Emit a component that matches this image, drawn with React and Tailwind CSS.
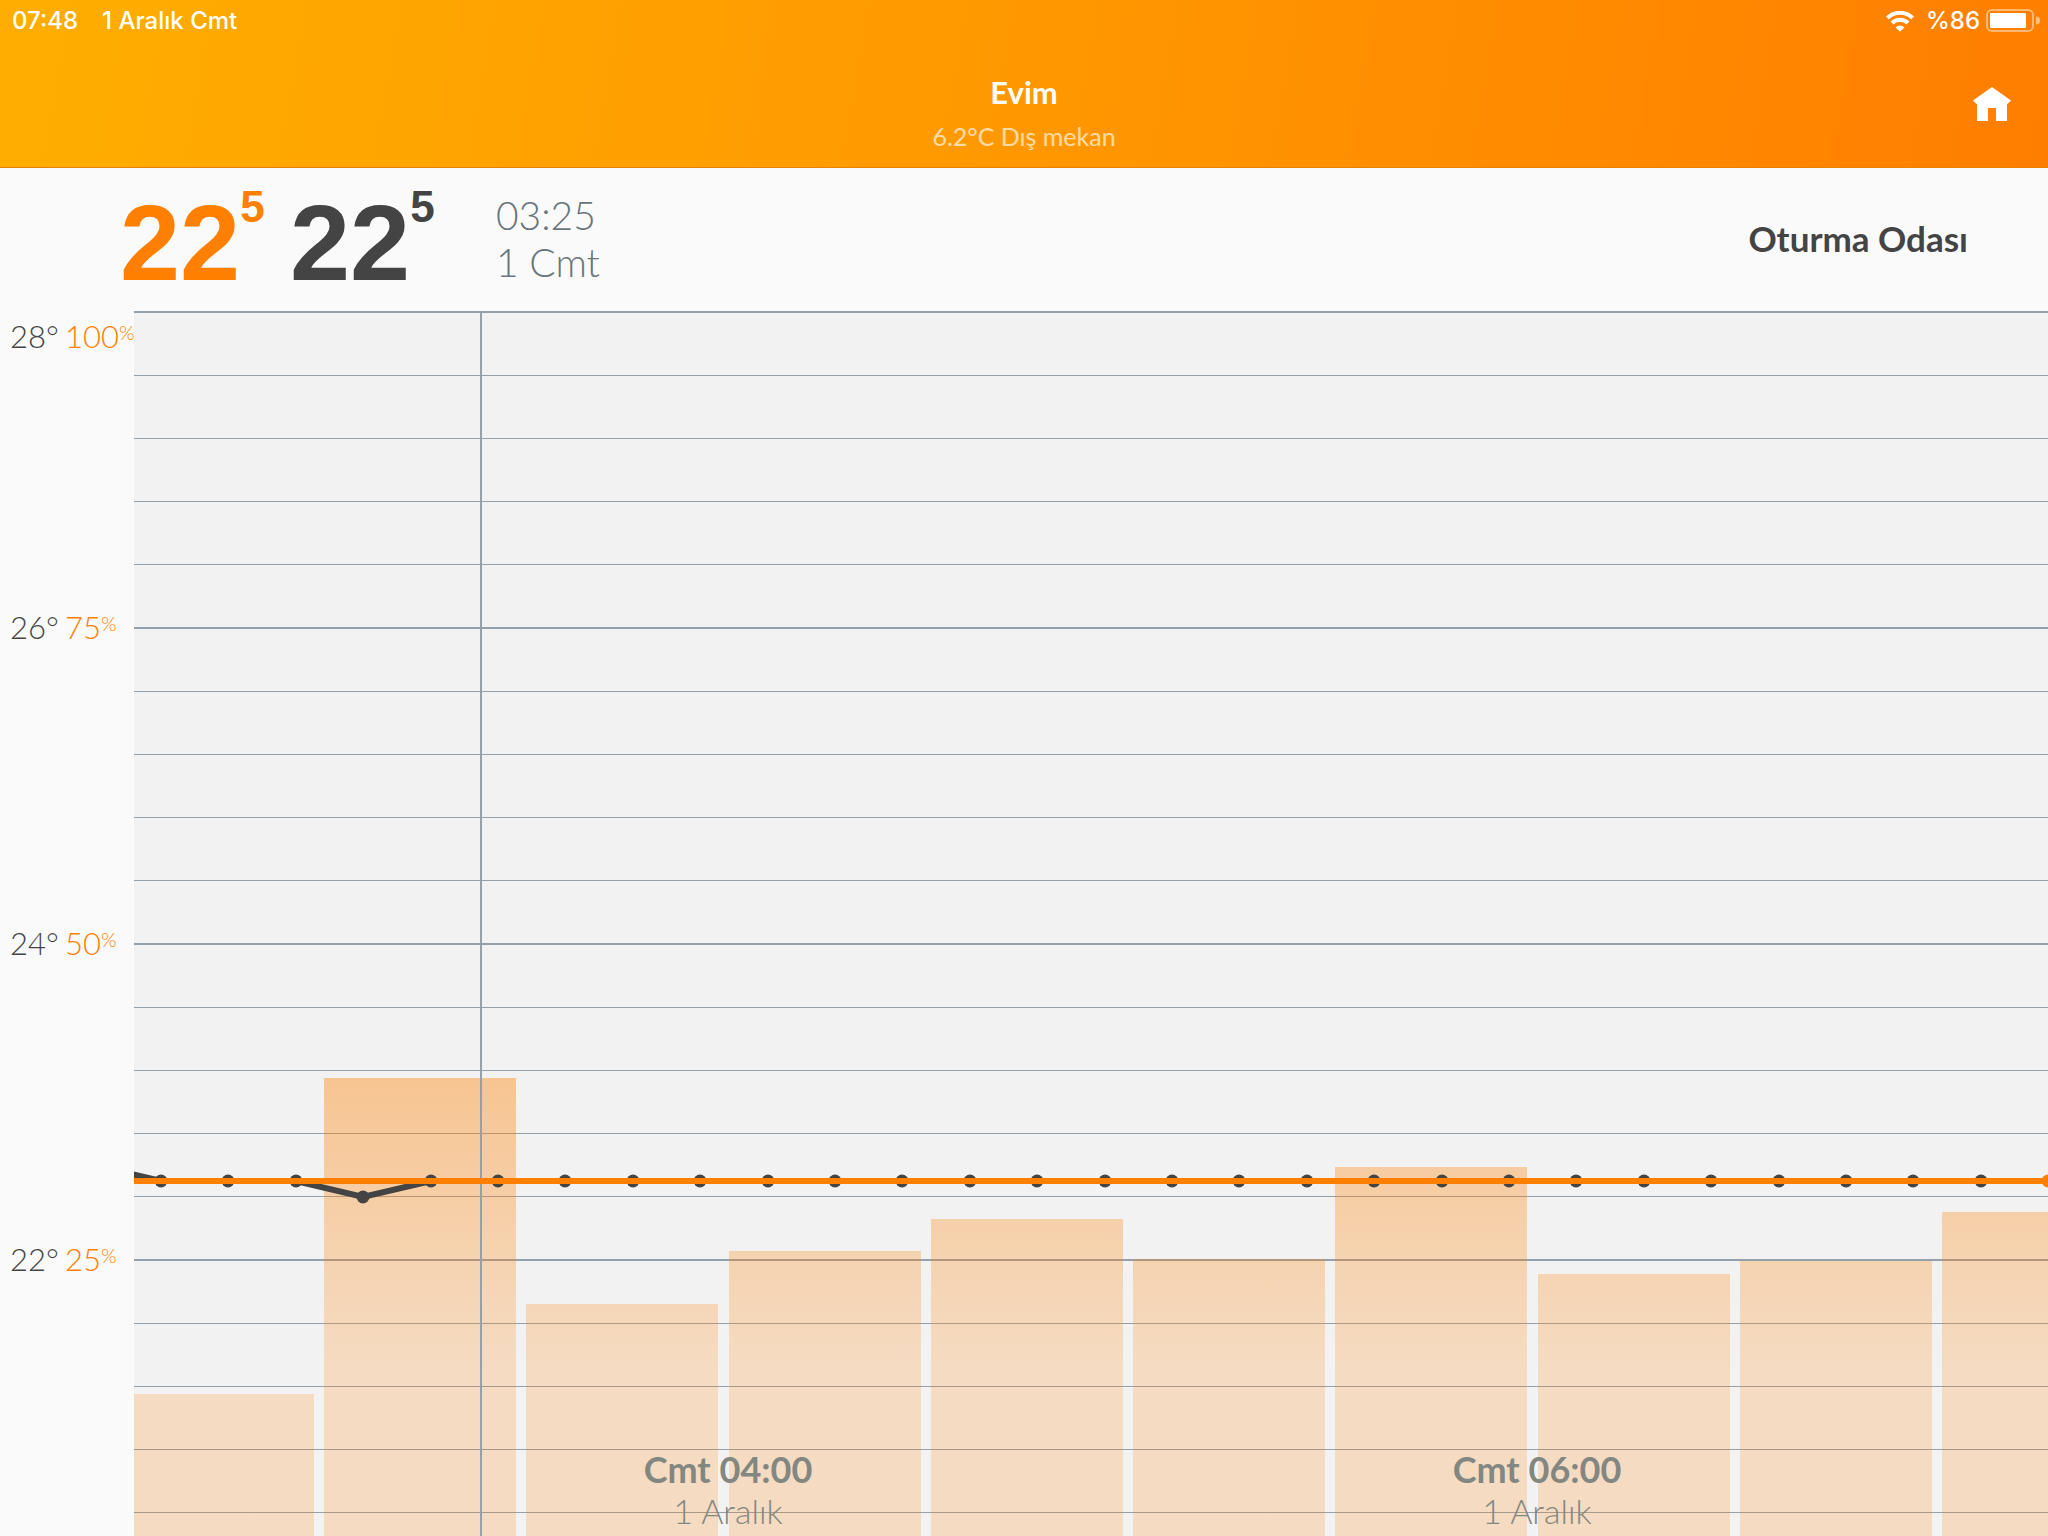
const AXIS = [
  { temp: 28, percent: 100, box: 'h-[159px] pt-[3px]' },
  { temp: 26, percent: 75, box: 'h-[316px] pt-[135px]' },
  { temp: 24, percent: 50, box: 'h-[316px] pt-[135px]' },
  { temp: 22, percent: 25, box: 'h-[316px] pt-[135px]' },
];

/* Chart coordinates are in pixels from the top left corner of the plot. */
const PLOT_HEIGHT = 1225;
const GRID = Array.from({ length: 20 }, (_, i) => ({
  major: i % 5 === 0,
  y: i % 5 === 0 ? Math.round(i * 63.2) : Math.floor(1 + i * 63.2),
}));

const BARS = [
  { x: -12, y: 1083 },
  { x: 190, y: 767 },
  { x: 392, y: 993 },
  { x: 595, y: 940 },
  { x: 797, y: 908 },
  { x: 999, y: 948 },
  { x: 1201, y: 856 },
  { x: 1404, y: 963 },
  { x: 1606, y: 950 },
  { x: 1808, y: 901 },
];

const LINE_Y = 870;
const POINTS = Array.from({ length: 28 }, (_, i) => ({
  x: Math.round(27 + i * 67.4),
  y: i === 3 ? LINE_Y + 16 : LINE_Y,
}));
const MEASURED = [{ x: -40, y: LINE_Y - 16 }, ...POINTS].map((p) => `${p.x},${p.y}`).join(' ');

const TIMES = [
  { x: 594, time: 'Cmt 04:00', date: '1 Aralık' },
  { x: 1403, time: 'Cmt 06:00', date: '1 Aralık' },
];

function WifiIcon() {
  return (
    <svg className="h-[21px] w-7" viewBox="0 0 28 21" fill="none" aria-hidden="true">
      <path d="M1.4 7a17.8 17.8 0 0 1 25.2 0" stroke="#fff" strokeWidth="4" />
      <path d="M6 12a11.3 11.3 0 0 1 16 0" stroke="#fff" strokeWidth="4" />
      <path d="M14 20.8 9.6 16.4a6.2 6.2 0 0 1 8.8 0Z" fill="#fff" />
    </svg>
  );
}

function BatteryIcon() {
  return (
    <svg className="h-6 w-[54px]" viewBox="0 0 54 24" aria-hidden="true">
      <rect x="1" y="1" width="46" height="21" rx="5" fill="none" stroke="#fff" strokeOpacity=".45" strokeWidth="2" />
      <rect x="4" y="4" width="36" height="15" rx="1" fill="#fff" />
      <path d="M50 7.5v8a4 4 0 0 0 0-8Z" fill="#fff" fillOpacity=".5" />
    </svg>
  );
}

function HomeIcon() {
  return (
    <svg className="h-[34px] w-[38px]" viewBox="0 0 38 34" fill="#fff" aria-hidden="true">
      <path d="M19 0 38 13.5 34.5 17H34V34H23V21H15V34H4V17H3.5L0 13.5Z" />
    </svg>
  );
}

function Reading({ label, color, whole, fraction }) {
  return (
    <div className={`flex w-[170px] items-start font-['Liberation_Sans'] font-bold ${color}`} aria-label={label}>
      <span className="pt-2 text-[108px] leading-[108px]">{whole}</span>
      <span className="pt-1 text-[44px] leading-[44px]">{fraction}</span>
    </div>
  );
}

function Chart() {
  return (
    <svg className="min-h-[1225px] min-w-0 flex-1 bg-[#f2f2f2] font-[Lato,sans-serif]" role="img" aria-label="Oturma Odası">
      <defs>
        <linearGradient id="bar" gradientUnits="userSpaceOnUse" x1="0" y1="767" x2="0" y2="1055">
          <stop offset="0" stopColor="#ff8000" stopOpacity=".4" />
          <stop offset="1" stopColor="#ff8000" stopOpacity=".2" />
        </linearGradient>
      </defs>
      {GRID.map((line) => (
        <rect key={line.y} x="0" y={line.y} width="100%" height={line.major ? 2 : 1} fill="#94a0ab" />
      ))}
      {BARS.map((bar) => (
        <rect key={bar.x} x={bar.x} y={bar.y} width="192" height={PLOT_HEIGHT - bar.y} fill="url(#bar)" />
      ))}
      <rect x="346" y="0" width="2" height="100%" fill="#94a0ab" />
      <polyline points={MEASURED} fill="none" stroke="#444" strokeWidth="6" />
      {POINTS.map((p) => (
        <circle key={p.x} cx={p.x} cy={p.y} r="6.5" fill="#444" />
      ))}
      <rect x="0" y={LINE_Y - 3} width="100%" height="6" fill="#ff8000" />
      <circle cx="1914" cy={LINE_Y} r="6.5" fill="#ff8000" />
      {TIMES.map((t) => (
        <g key={t.x} textAnchor="middle" fill="#838781">
          <text x={t.x} y="1172" className="text-[36px] font-bold">{t.time}</text>
          <text x={t.x} y="1213" className="text-[34px] font-light">{t.date}</text>
        </g>
      ))}
    </svg>
  );
}

export default function App() {
  return (
    <div className="flex min-h-screen flex-col bg-[#fafafa] font-[Lato,sans-serif] text-[#444]">
      <header className="flex h-[168px] flex-col border-b border-[#e88000] bg-[linear-gradient(100deg,#ffae00,#ff9800_50%,#ff7e00)] text-white">
        <div className="flex h-[42px] items-center justify-between pr-2 pl-3 font-[Inter,sans-serif] text-[24px] font-medium">
          <div className="flex gap-6">
            <span>07:48</span>
            <span>1 Aralık Cmt</span>
          </div>
          <div className="flex items-center">
            <WifiIcon />
            <span className="mr-[6px] ml-3">%86</span>
            <BatteryIcon />
          </div>
        </div>
        <div className="grid flex-1 grid-cols-[1fr_auto_1fr] items-start">
          <div />
          <div className="pt-[30px] text-center">
            <h1 className="text-[31px] leading-[40px] font-bold">Evim</h1>
            <p className="pt-1 text-[25px] leading-[40px] text-white/65">6.2°C Dış mekan</p>
          </div>
          <button type="button" aria-label="Ana sayfa" className="mt-[45px] mr-[37px] justify-self-end">
            <HomeIcon />
          </button>
        </div>
      </header>

      <section className="flex h-[143px] items-center justify-between pr-20 pb-[2px] pl-[120px]">
        <div className="flex items-center">
          <Reading label="Ayarlanan sıcaklık" color="text-[#ff8000]" whole="22" fraction="5" />
          <Reading label="Ölçülen sıcaklık" color="text-[#444]" whole="22" fraction="5" />
          <div className="pl-9 text-[39px] leading-[47px] font-light text-[#69757a]">
            <div>03:25</div>
            <div>1 Cmt</div>
          </div>
        </div>
        <h2 className="text-[35px] font-bold">Oturma Odası</h2>
      </section>

      <main className="flex flex-1">
        <div className="w-[134px] pl-[10px] text-[31px] leading-[44px] font-light">
          {AXIS.map((row) => (
            <div key={row.temp} className={`flex ${row.box}`}>
              <span className="w-[55px] shrink-0">{row.temp}°</span>
              <span className="flex text-[#ff8000]">
                {row.percent}
                <span className="text-[20px] leading-[36px]">%</span>
              </span>
            </div>
          ))}
        </div>
        <Chart />
      </main>
    </div>
  );
}
